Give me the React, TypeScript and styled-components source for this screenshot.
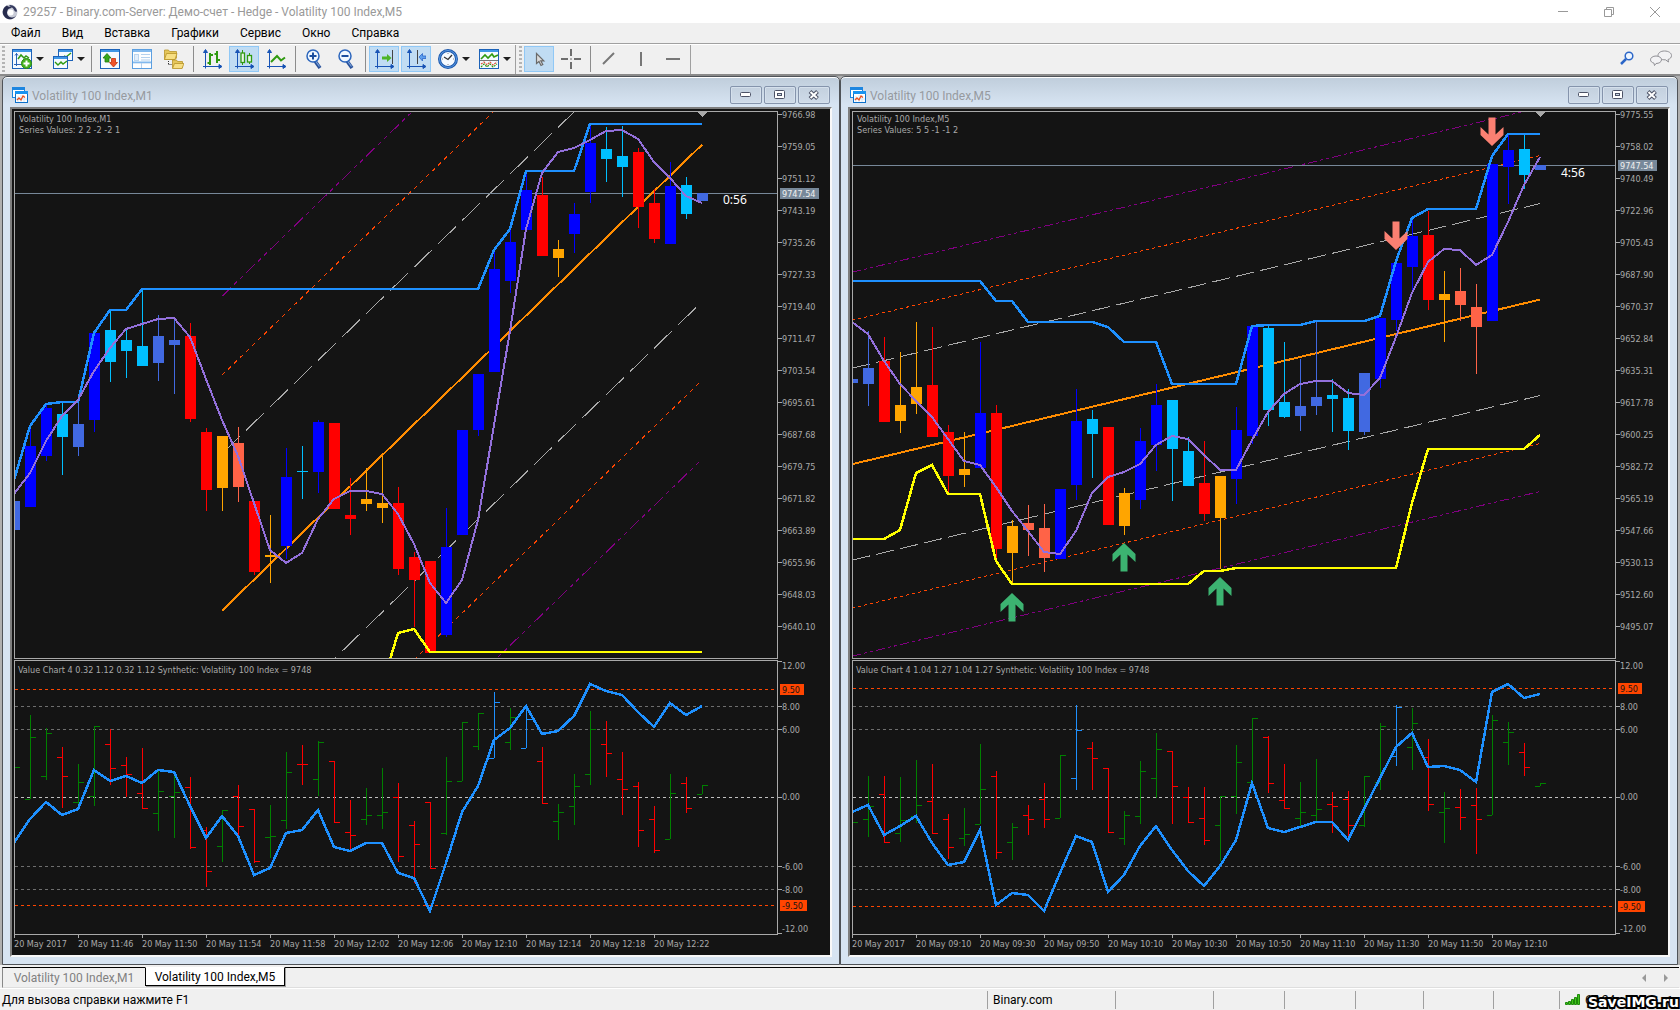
import React from 'react';
import styled, { createGlobalStyle, css } from 'styled-components';

const GlobalStyle = createGlobalStyle`
  * { box-sizing: border-box; }
  html, body { margin: 0; height: 100%; }
  #root { height: 100%; }
  body { background: #f0f0f0; color: #000; overflow: hidden; }
  body, button { font-family: Roboto, 'Noto Sans', sans-serif; font-size: 12px; }
  button { border: 0; padding: 0; background: none; color: inherit; }
`;

/* ---------- colours ---------- */

const INK = '#a9a9a9';
const BACK = '#141414';
const CHART_FONT = "'DejaVu Sans Condensed', 'DejaVu Sans', sans-serif";

const HUE: Record<string, string> = {
  B: '#0000ff',
  C: '#00bfff',
  Y: '#4169e1',
  R: '#ff0000',
  O: '#ffa500',
  T: '#ff6347',
  G: '#008000',
  D: '#1e90ff',
};

/* ---------- chart data ---------- */

type Candle = [string, number, number, number, number]; // colour, high, body top, body bottom, low
type Bar = [string, number, number, number, number]; // colour, high, low, open, close
type Point = [number, number]; // bar index, value

type ChartData = {
  name: string;
  series: string;
  value: string;
  countdown: string;
  countdownY: number;
  priceY: number;
  prices: string[];
  times: string[];
  candles: Candle[];
  upper: Point[];
  lower: Point[];
  average: Point[];
  trend: [Point, Point];
  channel: [number, number, number];
  arrows: ['up' | 'down', number, number][];
  bars: Bar[];
  oscillator: number[];
  band: [number, number];
};

const M1: ChartData = {
  name: 'Volatility 100 Index,M1',
  series: 'Series Values: 2 2 -2 -2 1',
  value: 'Value Chart 4 0.32 1.12 0.32 1.12 Synthetic: Volatility 100 Index = 9748',
  countdown: '0:56',
  countdownY: 275,
  priceY: 257,
  prices: ['9766.98', '9759.05', '9751.12', '9743.19', '9735.26', '9727.33', '9719.40', '9711.47', '9703.54', '9695.61', '9687.68', '9679.75', '9671.82', '9663.89', '9655.96', '9648.03', '9640.10'],
  times: ['2017', '11:46', '11:50', '11:54', '11:58', '12:02', '12:06', '12:10', '12:14', '12:18', '12:22'],
  candles: [
    ['Y', 1103, 1103, 1183, 1183], ['B', 898, 952, 1121, 1121], ['B', 838, 848, 979, 993], ['C', 834, 864, 927, 1031],
    ['Y', 832, 891, 955, 979], ['B', 641, 641, 879, 913], ['C', 578, 633, 721, 776], ['C', 633, 660, 690, 765],
    ['C', 523, 677, 732, 732], ['Y', 591, 649, 723, 773], ['Y', 600, 660, 674, 808], ['R', 613, 649, 878, 885],
    ['R', 902, 913, 1073, 1130], ['O', 924, 924, 1067, 1132], ['T', 900, 944, 1065, 1105], ['R', 1103, 1103, 1298, 1306],
    ['O', 1142, 1252, 1257, 1328], ['B', 958, 1037, 1227, 1262], ['C', 952, 1021, 1024, 1099], ['B', 880, 885, 1023, 1080],
    ['R', 889, 889, 1125, 1125], ['R', 1040, 1142, 1153, 1196], ['O', 1012, 1098, 1111, 1130], ['O', 978, 1109, 1122, 1163],
    ['R', 1065, 1109, 1290, 1306], ['R', 1244, 1257, 1320, 1450], ['R', 1268, 1268, 1521, 1521], ['B', 1122, 1230, 1471, 1478],
    ['B', 908, 908, 1197, 1197], ['B', 753, 753, 908, 923], ['B', 414, 465, 747, 747], ['B', 356, 391, 497, 530],
    ['B', 200, 248, 358, 358], ['R', 212, 262, 429, 429], ['O', 386, 410, 435, 487], ['B', 282, 314, 369, 421],
    ['B', 68, 118, 253, 282], ['C', 74, 135, 162, 226], ['C', 72, 154, 184, 267], ['R', 132, 143, 293, 351],
    ['R', 246, 283, 382, 393], ['B', 171, 237, 395, 395], ['C', 212, 234, 314, 326], ['Y', 256, 256, 278, 278],
  ],
  upper: [[0, 1045], [1, 896], [2, 836], [3, 832], [4, 830], [5, 641], [6, 577], [7, 577], [8, 520], [29, 520], [30, 412], [31, 356], [32, 196], [35, 196], [36, 66], [43, 66]],
  lower: [[23, 1612], [24, 1466], [25, 1454], [26, 1518], [43, 1518]],
  average: [1085, 1027, 937, 868, 824, 745, 682, 631, 617, 603, 600, 652, 768, 880, 980, 1110, 1237, 1274, 1246, 1153, 1099, 1075, 1076, 1084, 1140, 1222, 1330, 1385, 1320, 1155, 895, 635, 355, 202, 142, 133, 110, 86, 82, 108, 170, 215, 263, 284].map((v, i) => [i, v] as Point),
  trend: [[13, 1405], [43, 123]],
  channel: [432, 648, 865],
  arrows: [],
  bars: [
    ['G', 352, 352, 0, 352], ['G', 195, 449, 448, 262], ['G', 235, 392, 379, 250], ['R', 291, 476, 322, 379],
    ['G', 342, 478, 457, 397], ['G', 229, 470, 439, 229], ['R', 238, 405, 283, 355], ['R', 321, 443, 346, 373],
    ['R', 294, 475, 430, 475], ['G', 364, 543, 490, 424], ['G', 366, 566, 439, 427], ['R', 381, 599, 412, 592],
    ['R', 532, 711, 541, 664], ['G', 481, 638, 589, 481], ['R', 405, 560, 439, 529], ['R', 478, 641, 478, 634],
    ['G', 465, 624, 562, 559], ['G', 306, 539, 511, 367], ['R', 286, 407, 343, 343], ['G', 273, 440, 388, 277],
    ['R', 334, 517, 334, 517], ['R', 450, 598, 547, 556], ['G', 415, 527, 508, 496], ['G', 354, 539, 496, 487],
    ['R', 400, 638, 442, 619], ['R', 513, 700, 525, 583], ['R', 457, 655, 457, 655], ['G', 321, 557, 550, 394],
    ['G', 217, 394, 394, 217], ['G', 190, 302, 289, 190], ['D', 126, 325, 325, 157], ['G', 174, 302, 277, 202],
    ['D', 165, 295, 295, 208], ['R', 291, 460, 334, 460], ['G', 462, 570, 514, 487], ['G', 372, 527, 469, 409],
    ['G', 183, 407, 373, 238], ['R', 213, 383, 283, 310], ['R', 306, 497, 388, 418], ['R', 396, 593, 409, 541],
    ['R', 468, 611, 508, 601], ['G', 372, 568, 568, 430], ['R', 381, 491, 400, 475], ['G', 406, 433, 433, 406],
  ],
  oscillator: [580, 508, 458, 495, 479, 360, 393, 380, 399, 362, 366, 470, 565, 498, 560, 675, 655, 549, 541, 480, 593, 604, 581, 581, 670, 685, 783, 640, 488, 408, 270, 236, 168, 252, 244, 200, 104, 124, 135, 187, 232, 161, 196, 170],
  band: [118, 766],
};

const M5: ChartData = {
  name: 'Volatility 100 Index,M5',
  series: 'Series Values: 5 5 -1 -1 2',
  value: 'Value Chart 4 1.04 1.27 1.04 1.27 Synthetic: Volatility 100 Index = 9748',
  countdown: '4:56',
  countdownY: 202,
  priceY: 180,
  prices: ['9775.55', '9758.02', '9740.49', '9722.96', '9705.43', '9687.90', '9670.37', '9652.84', '9635.31', '9617.78', '9600.25', '9582.72', '9565.19', '9547.66', '9530.13', '9512.60', '9495.07'],
  times: ['2017', '09:10', '09:30', '09:50', '10:10', '10:30', '10:50', '11:10', '11:30', '11:50', '12:10'],
  candles: [
    ['Y', 767, 767, 778, 778], ['Y', 635, 737, 781, 842], ['R', 652, 718, 886, 886], ['O', 693, 839, 883, 915],
    ['O', 611, 790, 836, 864], ['R', 624, 784, 927, 927], ['R', 894, 913, 1034, 1082], ['O', 913, 1015, 1032, 1065],
    ['B', 666, 861, 1011, 1011], ['R', 839, 861, 1235, 1265], ['O', 1156, 1172, 1246, 1330], ['T', 1114, 1164, 1183, 1254],
    ['T', 1111, 1177, 1260, 1298], ['B', 1070, 1070, 1263, 1263], ['B', 796, 883, 1059, 1100], ['C', 853, 878, 919, 1039],
    ['R', 900, 900, 1169, 1169], ['O', 1067, 1081, 1172, 1196], ['B', 902, 938, 1100, 1125], ['B', 782, 839, 949, 1021],
    ['C', 825, 825, 960, 1103], ['C', 928, 966, 1062, 1062], ['R', 938, 1054, 1139, 1158], ['O', 1034, 1034, 1150, 1290],
    ['B', 845, 908, 1043, 1111], ['B', 622, 622, 923, 945], ['C', 622, 627, 853, 896], ['C', 666, 831, 872, 875],
    ['Y', 712, 842, 869, 910], ['Y', 610, 817, 842, 867], ['C', 767, 812, 823, 913], ['C', 795, 820, 911, 963],
    ['Y', 751, 751, 913, 922], ['B', 600, 600, 768, 791], ['B', 448, 448, 605, 635], ['B', 330, 374, 459, 525],
    ['R', 304, 371, 550, 578], ['O', 470, 534, 550, 666], ['T', 462, 525, 564, 608], ['T', 506, 569, 624, 754],
    ['B', 176, 176, 608, 608], ['B', 96, 138, 184, 286], ['C', 95, 135, 206, 245], ['Y', 180, 180, 193, 193],
  ],
  upper: [[0, 498], [8, 498], [9, 554], [10, 554], [11, 610], [15, 610], [16, 625], [17, 665], [19, 665], [20, 780], [24, 780], [25, 621], [26, 619], [28, 618], [29, 608], [32, 607], [33, 593], [34, 443], [35, 325], [36, 300], [39, 300], [40, 155], [41, 94], [43, 94]],
  lower: [[0, 1207], [2, 1207], [3, 1182], [4, 1027], [5, 1003], [6, 1083], [8, 1083], [9, 1269], [10, 1331], [21, 1331], [22, 1297], [23, 1295], [24, 1288], [34, 1287], [35, 1108], [36, 960], [42, 960], [43, 921]],
  average: [610, 645, 718, 781, 828, 872, 933, 994, 1004, 1064, 1130, 1187, 1244, 1249, 1187, 1080, 1038, 1024, 1002, 949, 924, 933, 976, 1017, 1018, 936, 857, 808, 781, 772, 773, 807, 811, 764, 653, 531, 447, 409, 413, 455, 426, 335, 235, 158].map((v, i) => [i, v] as Point),
  trend: [[0, 1002], [43, 549]],
  channel: [264, 396, 528],
  arrows: [['up', 10, 1357], ['up', 17, 1219], ['up', 23, 1312], ['down', 34, 414], ['down', 40, 126]],
  bars: [
    ['G', 517, 517, 0, 517], ['G', 378, 561, 508, 469], ['R', 378, 577, 433, 577], ['G', 381, 578, 550, 511],
    ['G', 330, 521, 500, 466], ['R', 342, 550, 454, 550], ['R', 492, 629, 508, 592], ['G', 474, 590, 565, 553],
    ['G', 282, 523, 523, 418], ['R', 364, 629, 379, 607], ['G', 519, 632, 577, 532], ['R', 465, 555, 496, 508],
    ['R', 399, 536, 448, 508], ['G', 316, 505, 505, 316], ['D', 165, 422, 385, 241], ['R', 276, 422, 295, 325],
    ['R', 355, 547, 355, 547], ['G', 483, 585, 565, 496], ['G', 333, 524, 499, 364], ['G', 249, 446, 385, 298],
    ['R', 304, 524, 304, 409], ['R', 411, 517, 442, 517], ['R', 411, 587, 505, 571], ['G', 439, 635, 526, 439],
    ['G', 285, 494, 439, 337], ['G', 205, 398, 398, 205], ['R', 258, 429, 262, 400], ['R', 342, 475, 451, 475],
    ['G', 396, 530, 505, 487], ['G', 327, 514, 496, 478], ['R', 426, 551, 463, 469], ['R', 423, 575, 448, 526],
    ['G', 379, 533, 526, 379], ['G', 219, 422, 397, 229], ['D', 165, 350, 319, 172], ['G', 174, 362, 292, 220],
    ['R', 267, 485, 322, 463], ['G', 426, 581, 487, 475], ['R', 417, 540, 472, 502], ['R', 414, 614, 466, 508],
    ['G', 195, 496, 496, 211], ['G', 216, 345, 277, 247], ['R', 279, 380, 307, 352], ['G', 400, 409, 409, 400],
  ],
  oscillator: [487, 467, 556, 530, 500, 580, 646, 637, 542, 766, 731, 736, 783, 670, 558, 577, 726, 676, 590, 530, 601, 665, 709, 650, 571, 400, 536, 546, 532, 516, 516, 571, 479, 385, 292, 249, 351, 348, 361, 396, 127, 104, 144, 132],
  band: [115, 769],
};

/* ---------- scales: series values to plot pixels ---------- */

const STEP = 16;
const barX = (i: number) => STEP * i - 1;
const priceY = (v: number) => Math.round(v / 2.751 - 12);
const valueY = (v: number) => Math.floor(v / 3 - 11);
const join = (pts: Point[], y: (v: number) => number) => pts.map(([i, v]) => `${barX(i)},${y(v)}`).join(' ');

/* ---------- page frame ---------- */

const Terminal = styled.div`
  display: flex;
  flex-direction: column;
  height: 100vh;
`;

const TitleBar = styled.header`
  display: flex;
  align-items: center;
  height: 23px;
  padding: 0 2px;
  background: #fff;
  color: #999;
  h1 { flex: 1; margin: 0 0 0 5px; font-size: 12px; font-weight: 400; line-height: 22px; }
`;

const SystemButton = styled.button`
  width: 46px;
  height: 22px;
  display: grid;
  place-items: center;
`;

const MenuBar = styled.nav`
  display: flex;
  height: 20px;
  background: #f0f0f0;
`;

const MenuItem = styled.button`
  padding: 0 10px 0 11px;
  line-height: 20px;
`;

const ToolBar = styled.div`
  display: flex;
  height: 33px;
  padding-top: 1px;
  border-top: 1px solid #a0a0a0;
  border-bottom: 2px solid #8a8a8a;
  box-shadow: inset 0 1px #fff;
  background: #f0f0f0;
`;

const ToolGroup = styled.div`
  display: flex;
  align-items: flex-start;
  gap: 2px;
  padding: 1px 2px 0 3px;
  border-right: 1px solid #a0a0a0;
  &:first-child { padding-left: 2px; }
`;

const Gripper = styled.span`
  width: 3px;
  height: 26px;
  background: repeating-linear-gradient(#b4b4b4 0 2px, transparent 2px 4px);
`;

const Tool = styled.button<{ $on?: boolean; $wide?: boolean }>`
  display: flex;
  align-items: center;
  width: ${p => (p.$wide ? 39 : 30)}px;
  height: 26px;
  padding-left: 4px;
  border: 1px solid transparent;
  svg { flex: none; }
  ${p => p.$on && css`
    background: #c0dcf3;
    border-color: #90c8f6;
  `}
`;

const Caret = styled.span`
  margin-left: 4px;
  border: 4px solid transparent;
  border-top-color: #1e1e1e;
  border-bottom: 0;
`;

const Separator = styled.span`
  width: 4px;
  height: 26px;
  background: linear-gradient(#8c8c8c, #8c8c8c) 2px 0 / 1px 100% no-repeat;
`;

const ToolEnd = styled.div`
  display: flex;
  align-items: center;
  gap: 16px;
  margin-left: auto;
  padding-right: 8px;
`;

const Workspace = styled.main`
  flex: 1;
  display: flex;
  padding: 0 2px;
  background: #b0b0b0;
`;

/* ---------- chart window ---------- */

const ChartFrame = styled.section`
  flex: 1;
  display: flex;
  flex-direction: column;
  min-width: 0;
  padding: 0 7px 7px;
  border: 1px solid #4f5358;
  border-radius: 5px 5px 0 0;
  box-shadow: inset 0 1px #fff;
  background: linear-gradient(#bfcddb, #d7e4f2 28px) #d7e4f2;
`;

const ChartTitle = styled.div`
  display: flex;
  align-items: center;
  height: 30px;
  padding: 6px 2px 0;
  color: #969a9f;
  h2 { flex: 1; margin: 0 0 0 4px; font-size: 12px; font-weight: 400; line-height: 16px; padding-top: 2px; }
`;

const FrameButton = styled.button`
  display: grid;
  place-items: center;
  width: 32px;
  height: 18px;
  margin-left: 2px;
  border: 1px solid #8594ac;
  border-radius: 2px;
  background: linear-gradient(#c3d0de, #cfdbe9);
  box-shadow: inset 0 0 0 1px #d5e0ec;
`;

const ChartArea = styled.div`
  flex: 1;
  min-height: 0;
  display: grid;
  grid-template-columns: minmax(0, 1fr) 52px;
  grid-template-rows: minmax(0, 1fr) 276px 20px;
  padding: 2px 0 0 2px;
  border: 2px solid;
  border-color: #7e7e7e #f8f8f8 #f8f8f8 #7e7e7e;
  background: ${BACK};
`;

const Plot = styled.div<{ $second?: boolean }>`
  position: relative;
  overflow: hidden;
  border: 1px solid ${INK};
  margin-top: ${p => (p.$second ? 1 : 0)}px;
  svg { display: block; width: 100%; height: 100%; }
`;

const Caption = styled.p<{ $second?: boolean }>`
  position: absolute;
  top: ${p => (p.$second ? 4 : 2)}px;
  left: ${p => (p.$second ? 3 : 4)}px;
  margin: 0;
  font: 9px/11px ${CHART_FONT};
  color: ${INK};
  white-space: pre;
`;

const Axis = styled.svg`
  display: block;
  width: 100%;
  height: 100%;
  overflow: visible;
  text { font: 9px ${CHART_FONT}; fill: ${INK}; }
`;

const TimeAxis = styled.div`
  grid-column: 1 / 3;
  display: flex;
  overflow: hidden;
`;

const TimeLabel = styled.span`
  width: 64px;
  white-space: nowrap;
  font: 9px/18px ${CHART_FONT};
  color: ${INK};
  background: linear-gradient(${INK}, ${INK}) 0 0 / 1px 3px no-repeat;
`;

/* ---------- chart drawings ---------- */

function ChannelLine({ data, shift, color, dash }: { data: ChartData; shift: number; color: string; dash?: number[] }) {
  const [[i1, v1], [i2, v2]] = data.trend;
  const x1 = barX(i1);
  const x2 = barX(i2);
  const y1 = (v1 + shift) / 2.751 - 12;
  const y2 = (v2 + shift) / 2.751 - 12;
  const stretch = Math.hypot(x2 - x1, y2 - y1) / (x2 - x1);
  return (
    <line
      x1={x1} y1={y1} x2={x2} y2={y2}
      stroke={color}
      strokeWidth={dash ? 1 : 2}
      strokeDasharray={dash?.map(d => d * stretch).join(' ')}
      shapeRendering="crispEdges"
    />
  );
}

function PricePlot({ data }: { data: ChartData }) {
  const [near, mid, far] = data.channel;
  return (
    <svg aria-label={data.name} shapeRendering="crispEdges">
      {[-1, 1].map(side => (
        <g key={side}>
          <ChannelLine data={data} shift={side * near} color={INK} dash={[18, 6]} />
          <ChannelLine data={data} shift={side * mid} color="#ff4500" dash={[3, 3]} />
          <ChannelLine data={data} shift={side * far} color="#800080" dash={[9, 3, 3, 3, 3, 3]} />
        </g>
      ))}
      <rect x="0" y={priceY(data.priceY)} width="100%" height="1" fill="#778899" />
      <ChannelLine data={data} shift={0} color="#ff8c00" />
      {data.candles.map(([c, high, top, bottom, low], i) => (
        <g key={i} fill={HUE[c]}>
          {low > high && <rect x={barX(i)} y={priceY(high)} width="1" height={priceY(low) - priceY(high)} />}
          <rect x={barX(i) - 5} y={priceY(top)} width="11" height={Math.max(1, priceY(bottom) - priceY(top))} />
        </g>
      ))}
      <g fill="none" strokeWidth="2.5">
        <polyline points={join(data.upper, priceY)} stroke="#1e90ff" />
        <polyline points={join(data.lower, priceY)} stroke="#ffff00" />
        <polyline points={join(data.average, priceY)} stroke="#9370db" strokeWidth="2" />
      </g>
      {data.arrows.map(([dir, i, tip]) => (
        <path
          key={i}
          shapeRendering="auto"
          transform={`translate(${barX(i)} ${priceY(tip)}) scale(1 ${dir === 'up' ? 1 : -1})`}
          d="M0 0L11.500 11V19L3.500 11.500V28.500H-3.500V11.500L-11.500 19V11Z"
          fill={dir === 'up' ? '#3cb371' : '#fa8072'}
        />
      ))}
      <path d={`M${barX(43) - 5} 0h10l-5 5z`} fill={INK} />
      <text x={barX(43) + 21} y={priceY(data.countdownY) + 4} fill="#fff" fontFamily="'Noto Sans', sans-serif" fontSize="12">{data.countdown}</text>
    </svg>
  );
}

function ValuePlot({ data }: { data: ChartData }) {
  const levels: [number, string][] = [
    [data.band[0], '#ff4500'], [169, '#6e6e6e'], [238, '#6e6e6e'], [442, '#c0c0c0'],
    [649, '#6e6e6e'], [718, '#6e6e6e'], [data.band[1], '#ff4500'],
  ];
  return (
    <svg aria-label={data.value} shapeRendering="crispEdges">
      {levels.map(([v, color]) => (
        <line key={v} x1="0" x2="100%" y1={valueY(v) + 0.5} y2={valueY(v) + 0.5} stroke={color} strokeDasharray="3 3" />
      ))}
      {data.bars.map(([c, high, low, open, close], i) => (
        <g key={i} fill={HUE[c]}>
          <rect x={barX(i)} y={valueY(high)} width="1" height={Math.max(1, valueY(low) - valueY(high))} />
          {open > 0 && <rect x={barX(i) - 5} y={valueY(open)} width="5" height="1" />}
          <rect x={barX(i)} y={valueY(close)} width="6" height="1" />
        </g>
      ))}
      <polyline points={join(data.oscillator.map((v, i) => [i, v] as Point), valueY)} fill="none" stroke="#1e90ff" strokeWidth="2.5" />
    </svg>
  );
}

function PriceAxis({ data }: { data: ChartData }) {
  const tag = priceY(data.priceY) + 1;
  return (
    <Axis shapeRendering="crispEdges">
      {data.prices.map((p, k) => (
        <g key={p}>
          <rect x="0" y={3 + 32 * k} width="4" height="1" fill={INK} />
          <text x="4" y={7 + 32 * k}>{p}</text>
        </g>
      ))}
      <rect x="2" y={tag - 5} width="39" height="11" fill="#778899" />
      <text x="4" y={tag + 4} style={{ fill: '#f0f0f0' }}>9747.54</text>
    </Axis>
  );
}

function ValueAxis({ data }: { data: ChartData }) {
  const labels: [string, number, number][] = [
    ['12.00', 46, 34], ['8.00', 169, 169], ['6.00', 238, 238], ['0.00', 440, 442],
    ['-6.00', 649, 649], ['-8.00', 718, 718], ['-12.00', 835, 851],
  ];
  return (
    <Axis shapeRendering="crispEdges">
      {labels.map(([t, v, tick]) => (
        <g key={t}>
          <rect x="0" y={valueY(tick) + 2} width="4" height="1" fill={INK} />
          <text x="4" y={valueY(v) + 6}>{t}</text>
        </g>
      ))}
      {data.band.map((v, k) => (
        <g key={v}>
          <rect x="2" y={valueY(v) - 3} width={k ? 27 : 24} height="11" fill="#ff4500" />
          <text x="4" y={valueY(v) + 6} style={{ fill: BACK }}>{k ? '-9.50' : '9.50'}</text>
        </g>
      ))}
    </Axis>
  );
}

function ChartWindow({ data }: { data: ChartData }) {
  return (
    <ChartFrame>
      <ChartTitle>
        <ChartIcon />
        <h2>{data.name}</h2>
        <FrameButton aria-label="Minimize">
          <svg width="12" height="6"><rect x="0.5" y="0.5" width="10" height="4" rx="1" fill="#fff" stroke="#4c5266" /></svg>
        </FrameButton>
        <FrameButton aria-label="Restore">
          <svg width="12" height="10"><rect x="0.5" y="0.5" width="10" height="8" rx="1" fill="#fff" stroke="#4c5266" /><rect x="3.500" y="3.500" width="4" height="2" fill="#cdd9e6" stroke="#4c5266" /></svg>
        </FrameButton>
        <FrameButton aria-label="Close">
          <svg width="12" height="10" fill="none"><path d="M2 1.500L9.500 8.500M9.500 1.500L2 8.500" stroke="#4c5266" strokeWidth="4" /><path d="M2.500 2L9 8M9 2L2.500 8" stroke="#fff" strokeWidth="2" /></svg>
        </FrameButton>
      </ChartTitle>
      <ChartArea>
        <Plot>
          <PricePlot data={data} />
          <Caption>{data.name}{'\n'}{data.series}</Caption>
        </Plot>
        <PriceAxis data={data} />
        <Plot $second>
          <ValuePlot data={data} />
          <Caption $second>{data.value}</Caption>
        </Plot>
        <ValueAxis data={data} />
        <TimeAxis>
          {data.times.map(t => <TimeLabel key={t}>20 May {t}</TimeLabel>)}
        </TimeAxis>
      </ChartArea>
    </ChartFrame>
  );
}

/* ---------- icons ---------- */

const Icon = ({ children, size = 20 }: { children: React.ReactNode; size?: number }) => (
  <svg width={size} height={size} viewBox="0 0 20 20" fill="none">{children}</svg>
);

const Axes = () => (
  <path d="M3.500 18V3M1 17.500h17M3.500 0.500l-2 3h4zM20 17.500l-3-2v4zM1.500 17.500h4M3.500 15.500v4" stroke="#1753b5" strokeWidth="1" fill="#1753b5" />
);

const Pane = ({ x = 0, y = 0, w = 20, h = 20 }: { x?: number; y?: number; w?: number; h?: number }) => (
  <g>
    <rect x={x + 0.5} y={y + 0.5} width={w - 1} height={h - 1} fill="#f4faff" stroke="#1c62b8" />
    <rect x={x + 1} y={y + 1} width={w - 2} height="2" fill="#3f97e6" />
  </g>
);

const ChartIcon = () => (
  <svg width="16" height="16" viewBox="0 0 16 16" fill="none">
    <rect x="0.500" y="0.500" width="12" height="10" fill="#fff" stroke="#1e86e0" />
    <rect x="0" y="0" width="13" height="3" fill="#1e86e0" />
    <rect x="3.500" y="4.500" width="12" height="11" fill="#fff" stroke="#0b6fc9" />
    <rect x="3" y="4" width="13" height="3" fill="#1893f0" />
    <path d="M6 9v6M9 8v7M12 8v7M4 12h11" stroke="#d4e6f5" />
    <path d="M5 13l2-2 2 2 2-4 2 1.500" stroke="#e8501e" strokeWidth="1.300" />
  </svg>
);

const Logo = () => (
  <svg width="16" height="16" viewBox="0 0 16 16">
    <circle cx="8" cy="8" r="7.500" fill="#c9ccd8" />
    <path d="M5 1.400a7.200 7.200 0 1 0 10 7.600A5 5 0 1 1 5 8c1-1 0-2 1.500-3C8 4 9 4.500 10 3.500 9 2.500 7 3.500 5 1.400z" fill="#272c4e" />
    <path d="M8 1a7 7 0 0 1 7 6c-1 2-2.500 0-3.500-2S9 3.500 7 2z" fill="#343a5e" />
    <circle cx="8.600" cy="8.500" r="3" fill="#fff" />
  </svg>
);

const NewChart = () => (
  <Icon>
    <Pane />
    <path d="M4.500 4v13M2 15.500h10M3 6.500l1.500-2 1.500 2" stroke="#2a64b8" />
    <path d="M6 10l3-4 3 3 2-2 3 2" stroke="#2f9a10" strokeWidth="1.500" />
    <circle cx="14.500" cy="14.500" r="5" fill="#46b31f" stroke="#2c8a12" />
    <path d="M11.500 14.500h6M14.500 11.500v6" stroke="#fff" strokeWidth="2" />
  </Icon>
);

const Profiles = () => (
  <Icon>
    <Pane x={5} w={15} h={12} />
    <path d="M11 7l2 1 5-4" stroke="#2f9a10" strokeWidth="1.400" />
    <Pane y={7} w={15} h={13} />
    <path d="M2 13l3 3 3-3 2 2 4-3" stroke="#2f9a10" strokeWidth="1.400" />
  </Icon>
);

const MarketWatch = () => (
  <Icon>
    <Pane />
    <path d="M7 4.500l4 4.500H9v4H5V9H3z" fill="#35a71a" stroke="#22780e" strokeWidth="0.800" />
    <path d="M13.500 18l4-4.500h-2v-4h-4v4h-2z" fill="#f0542a" stroke="#c2330c" strokeWidth="0.800" />
  </Icon>
);

const DataWindow = () => (
  <Icon>
    <rect x="0.500" y="0.500" width="19" height="19" fill="#fdfeff" stroke="#5c9fe0" />
    <path d="M1 2h18" stroke="#82b9ee" strokeWidth="2" />
    <rect x="2.500" y="5.500" width="4" height="6" fill="#e4effb" stroke="#bcd6ef" />
    <path d="M9 5.500h9M9 8.500h9M9 11h9M1 14h18M9.500 14v5" stroke="#b5d1ee" />
    <rect x="1" y="12.500" width="18" height="1.500" fill="#82b9ee" />
  </Icon>
);

const Navigator = () => (
  <Icon>
    <path d="M0.500 1h4l1 1.500h7V9L11 10.500H0.500z" fill="#e5c65a" stroke="#b8942a" strokeWidth="0.800" />
    <path d="M2.500 4.500h10.500l-2 6H0.500z" fill="#f7df83" stroke="#b8942a" strokeWidth="0.800" />
    <path d="M8.500 11h4l1 1.500h5V19H8.500z" fill="#e5c65a" stroke="#b8942a" strokeWidth="0.800" />
    <path d="M10.500 14.500h9.500l-2 5H8.500z" fill="#f7df83" stroke="#b8942a" strokeWidth="0.800" />
    <path d="M4.500 12v4M4.500 15.500h4" stroke="#333" strokeDasharray="1 1" />
  </Icon>
);

const BarsIcon = () => (
  <Icon><Axes /><path d="M8 4v12M5.500 14H8M8 6h3M15 2v12M12.500 5H15M15 11h3" stroke="#2f9a10" strokeWidth="2" /></Icon>
);
const CandlesIcon = () => (
  <Icon><Axes /><path d="M8.500 1v15M15.500 4v11" stroke="#2f9a10" /><rect x="7" y="4" width="3.500" height="9.500" fill="#eaf6ea" stroke="#2f9a10" strokeWidth="1.300" /><rect x="13.500" y="6.500" width="4" height="6.500" fill="#eaf6ea" stroke="#2f9a10" strokeWidth="1.300" /></Icon>
);
const LineIcon = () => (
  <Icon><Axes /><path d="M5 13l6-6 4 4.500 4-3" stroke="#2f9a10" strokeWidth="2" /></Icon>
);
const Zoom = ({ plus }: { plus?: boolean }) => (
  <Icon>
    <path d="M11 12l5 7" stroke="#27509a" strokeWidth="3.500" />
    <path d="M11.500 12l4 5.500" stroke="#7ba3d8" strokeWidth="1.200" />
    <circle cx="9" cy="7" r="6" fill="#f2f9ff" stroke="#2c66bd" strokeWidth="1.500" />
    <path d={plus ? 'M5.500 7h7M9 3.500v7' : 'M5.500 7h7'} stroke="#1d4f9e" strokeWidth="2" />
  </Icon>
);
const AutoScroll = () => (
  <Icon><Axes /><path d="M18.500 1v14" stroke="#444" /><path d="M8 7.500h5V5l4.500 4-4.500 4v-2.500H8z" fill="#4cb526" /></Icon>
);
const Shift = () => (
  <Icon><Axes /><path d="M11.500 1v14" stroke="#444" /><path d="M13 8l3.500-3.500V7H20v2.500h-3.500V12z" fill="#5c9fee" stroke="#2b66c8" strokeWidth="0.800" /></Icon>
);
const Clock = () => (
  <Icon>
    <circle cx="10" cy="10" r="8.500" fill="#f5faff" stroke="#1b57ac" strokeWidth="3" />
    <circle cx="10" cy="10" r="8.500" stroke="#5a9ae2" strokeWidth="1" />
    <path d="M10 4v1M10 15v1M4 10h1M15 10h1" stroke="#888" />
    <path d="M6 8l4 2.500 4-4.500" stroke="#333" strokeWidth="1.300" />
  </Icon>
);
const Template = () => (
  <Icon>
    <Pane />
    <path d="M2 10l4-4 3 3 4-4 2 3 4-2" stroke="#2f9a10" strokeWidth="1.700" />
    <path d="M1 11.500h18" stroke="#777" />
    <path d="M2 15l3-2 3 3 3-3 3 3 4-3" stroke="#e0533a" strokeWidth="1.200" strokeDasharray="2 1" />
    <path d="M2 18l3-3 3 3 3-3 3 3 4-3" stroke="#2f9a10" strokeWidth="1.200" strokeDasharray="2 1" />
  </Icon>
);
const Cursor = () => (
  <Icon><path d="M7.500 4.500v10l2.500-2 2 4 1.800-1-2-3.700h3z" fill="#dcdcdc" stroke="#6a6a6a" strokeWidth="1.200" /></Icon>
);
const Crosshair = () => (
  <Icon><path d="M0 10h7M9.500 10h1M13 10h7M10 0v7M10 13v7" stroke="#6e6e6e" strokeWidth="2" /></Icon>
);
const Stroke = ({ d }: { d: string }) => (
  <Icon><path d={d} stroke="#777" strokeWidth="2" /></Icon>
);

function Toolbars() {
  return (
    <ToolBar role="toolbar">
      <ToolGroup>
        <Gripper />
        <Tool $wide aria-label="Новый график"><NewChart /><Caret /></Tool>
        <Tool $wide aria-label="Профили"><Profiles /><Caret /></Tool>
        <Separator />
        <Tool aria-label="Обзор рынка"><MarketWatch /></Tool>
        <Tool aria-label="Окно данных"><DataWindow /></Tool>
        <Tool aria-label="Навигатор"><Navigator /></Tool>
        <Separator />
        <Tool aria-label="Бары"><BarsIcon /></Tool>
        <Tool $on aria-label="Свечи"><CandlesIcon /></Tool>
        <Tool aria-label="Линия"><LineIcon /></Tool>
        <Separator />
        <Tool aria-label="Увеличить"><Zoom plus /></Tool>
        <Tool aria-label="Уменьшить"><Zoom /></Tool>
        <Separator />
        <Tool $on aria-label="Автопрокрутка"><AutoScroll /></Tool>
        <Tool $on aria-label="Сдвиг графика"><Shift /></Tool>
        <Tool $wide aria-label="Период"><Clock /><Caret /></Tool>
        <Tool $wide aria-label="Шаблоны"><Template /><Caret /></Tool>
      </ToolGroup>
      <ToolGroup>
        <Gripper />
        <Tool $on aria-label="Курсор"><Cursor /></Tool>
        <Tool aria-label="Перекрестие"><Crosshair /></Tool>
        <Separator />
        <Tool aria-label="Трендовая линия"><Stroke d="M4 15L15 4" /></Tool>
        <Tool aria-label="Вертикальная линия"><Stroke d="M10 3v14" /></Tool>
        <Tool aria-label="Горизонтальная линия"><Stroke d="M3 10h14" /></Tool>
      </ToolGroup>
      <ToolEnd>
        <button aria-label="Поиск">
          <svg width="14" height="14" viewBox="0 0 14 14" fill="none"><circle cx="9" cy="5" r="3.800" fill="#eef6ff" stroke="#2b66c8" strokeWidth="1.500" /><path d="M6 8l-5 5" stroke="#2b66c8" strokeWidth="2.500" /></svg>
        </button>
        <button aria-label="Чат">
          <svg width="22" height="16" viewBox="0 0 22 16" fill="#f2f2f4" stroke="#8f8f94">
            <path d="M14.500 1c4 0 7 2 7 4.500 0 2-1.500 3.500-3.500 4l.5 2.500-3-2.200C11 10 8 8 8 5.500S10.500 1 14.500 1z" />
            <path d="M6 6c3 0 5.500 1.600 5.500 3.800S9 13.500 6 13.500L4.500 15.500 4 13.200C2 12.600.5 11.500.5 9.800.5 7.600 3 6 6 6z" />
          </svg>
        </button>
      </ToolEnd>
    </ToolBar>
  );
}

/* ---------- bottom bars ---------- */

const TabBar = styled.div`
  display: flex;
  height: 21px;
  margin: 2px 1px 0 2px;
  border-top: 1px solid #000;
  border-bottom: 1px solid #dedede;
  border-left: 1px solid #888;
`;

const Tab = styled.button<{ $active?: boolean }>`
  width: ${p => (p.$active ? 140 : 142)}px;
  height: 19px;
  line-height: 20px;
  color: #808080;
  ${p => p.$active && css`
    margin-top: -1px;
    color: #000;
    background: #fff;
    border: 1px solid #000;
    border-top-color: #fff;
    box-shadow: 1px 1px #a0a0a0;
    line-height: 18px;
  `}
`;

const TabArrows = styled.div`
  display: flex;
  gap: 18px;
  align-items: center;
  margin-left: auto;
  padding-right: 11px;
`;

const StatusBar = styled.footer`
  position: relative;
  display: flex;
  align-items: center;
  height: 22px;
  border-top: 1px solid #fff;
  line-height: 20px;
`;

const Cell = styled.span<{ $w?: number }>`
  flex: ${p => (p.$w ? `0 0 ${p.$w}px` : '1')};
  height: 18px;
  line-height: 18px;
  padding-left: ${p => (p.$w ? 5 : 2)}px;
  border-left: ${p => (p.$w ? '1px solid #a0a0a0' : '0')};
  white-space: nowrap;
  svg { margin-right: 5px; vertical-align: -1px; }
`;

const Watermark = styled.span`
  position: absolute;
  right: 1px;
  bottom: -2px;
  font: 700 14px/20px 'DejaVu Sans', sans-serif;
  color: #fff;
  -webkit-text-stroke: 4px #000;
  paint-order: stroke fill;
`;

export default function App() {
  return (
    <Terminal>
      <GlobalStyle />
      <TitleBar>
        <Logo />
        <h1>29257 - Binary.com-Server: Демо-счет - Hedge - Volatility 100 Index,M5</h1>
        <SystemButton aria-label="Свернуть"><svg width="10" height="10"><path d="M0 4.500h10" stroke="#999" /></svg></SystemButton>
        <SystemButton aria-label="Развернуть"><svg width="10" height="10" fill="none" stroke="#999"><path d="M0.500 2.500h7v7h-7zM2.500 2.500v-2h7v7h-2" /></svg></SystemButton>
        <SystemButton aria-label="Закрыть"><svg width="10" height="10" stroke="#999"><path d="M0 0l10 10M10 0L0 10" /></svg></SystemButton>
      </TitleBar>
      <MenuBar>
        {['Файл', 'Вид', 'Вставка', 'Графики', 'Сервис', 'Окно', 'Справка'].map(m => <MenuItem key={m}>{m}</MenuItem>)}
      </MenuBar>
      <Toolbars />
      <Workspace>
        <ChartWindow data={M1} />
        <ChartWindow data={M5} />
      </Workspace>
      <TabBar>
        <Tab>Volatility 100 Index,M1</Tab>
        <Tab $active>Volatility 100 Index,M5</Tab>
        <TabArrows>
          <svg width="4" height="8"><path d="M4 0v8L0 4z" fill="#999" /></svg>
          <svg width="4" height="8"><path d="M0 0v8l4-4z" fill="#999" /></svg>
        </TabArrows>
      </TabBar>
      <StatusBar>
        <Cell>Для вызова справки нажмите F1</Cell>
        <Cell $w={128}>Binary.com</Cell>
        <Cell $w={98} />
        <Cell $w={71} />
        <Cell $w={71} />
        <Cell $w={68} />
        <Cell $w={70} />
        <Cell $w={66} />
        <Cell $w={121}>
          <svg width="15" height="11" fill="#3fc41a" stroke="#1d8a0a">
            <path d="M0.500 8.500h2v2h-2zM3.500 7.500h2v3h-2zM6.500 5.500h2v5h-2zM9.500 3.500h2v7h-2zM12.500 0.500h2v10h-2z" />
          </svg>
          67.24
        </Cell>
        <Watermark>SaveIMG.ru</Watermark>
      </StatusBar>
    </Terminal>
  );
}
